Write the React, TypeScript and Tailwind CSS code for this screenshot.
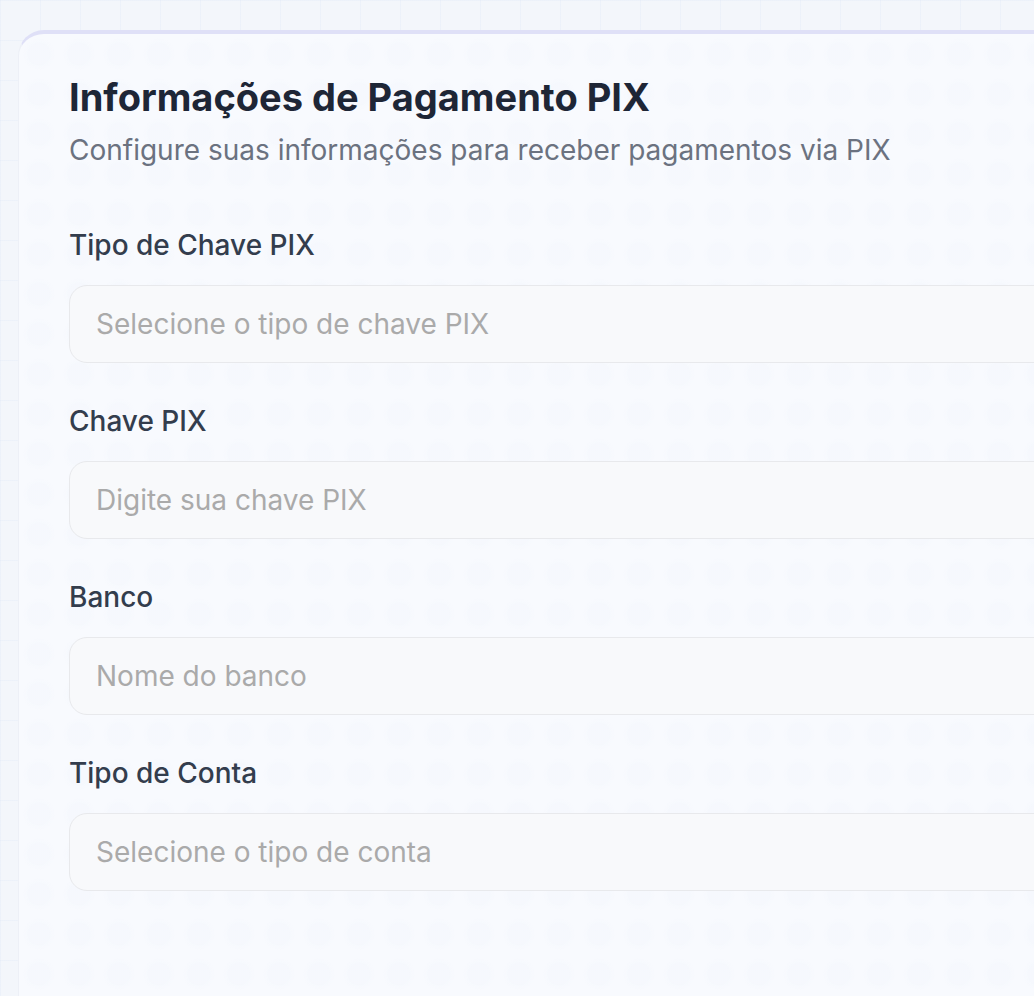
import React from 'react';

const FIELDS = [
  { label: 'Tipo de Chave PIX', placeholder: 'Selecione o tipo de chave PIX', select: true },
  { label: 'Chave PIX', placeholder: 'Digite sua chave PIX', select: false },
  { label: 'Banco', placeholder: 'Nome do banco', select: false },
  { label: 'Tipo de Conta', placeholder: 'Selecione o tipo de conta', select: true },
];

const Field: React.FC<{ label: string; placeholder: string; select: boolean }> = ({
  label,
  placeholder,
  select,
}) => (
  <div className="flex flex-col">
    <label className="text-[28px] leading-[40px] font-medium text-[#333d4d]">{label}</label>
    {select ? (
      <button
        type="button"
        className="mt-[20px] flex h-[78px] w-full items-center rounded-[18px] border border-[#e8e9ec] bg-[#f8f9fb] px-[26px] text-left text-[28px] text-[#aaaaaa]"
      >
        {placeholder}
      </button>
    ) : (
      <input
        readOnly
        placeholder={placeholder}
        className="mt-[20px] h-[78px] w-full rounded-[18px] border border-[#e8e9ec] bg-[#f8f9fb] px-[26px] text-[28px] outline-none placeholder:text-[#aaaaaa]"
      />
    )}
  </div>
);

export default function App() {
  return (
    <div className="h-[996px] w-[1034px] overflow-hidden bg-[#f3f6fb] bg-[linear-gradient(to_right,rgba(220,230,248,0.3)_1px,transparent_1px),linear-gradient(to_bottom,rgba(220,230,248,0.3)_1px,transparent_1px)] bg-[size:40px_40px] pl-[18px] pt-[30px] font-['Inter',sans-serif]">
      <div className="min-h-[1100px] w-[1300px] rounded-[26px] border border-[#edf0f7] border-t-4 border-t-[#dfe0f7] bg-[#f8fafe] bg-[radial-gradient(circle,rgba(238,243,252,0.25)_10px,transparent_16px)] bg-[size:40px_40px] pl-[50px] pr-[60px] pt-[41px]">
        <h2 className="text-[38px] leading-[44px] font-bold text-[#1e2636]">
          Informações de Pagamento PIX
        </h2>
        <p className="mt-[13px] text-[28px] leading-[36px] text-[#6b7280]">
          Configure suas informações para receber pagamentos via PIX
        </p>
        <div className="mt-[57px] flex flex-col gap-[38px]">
          {FIELDS.map((f) => (
            <Field key={f.label} {...f} />
          ))}
        </div>
      </div>
    </div>
  );
}
